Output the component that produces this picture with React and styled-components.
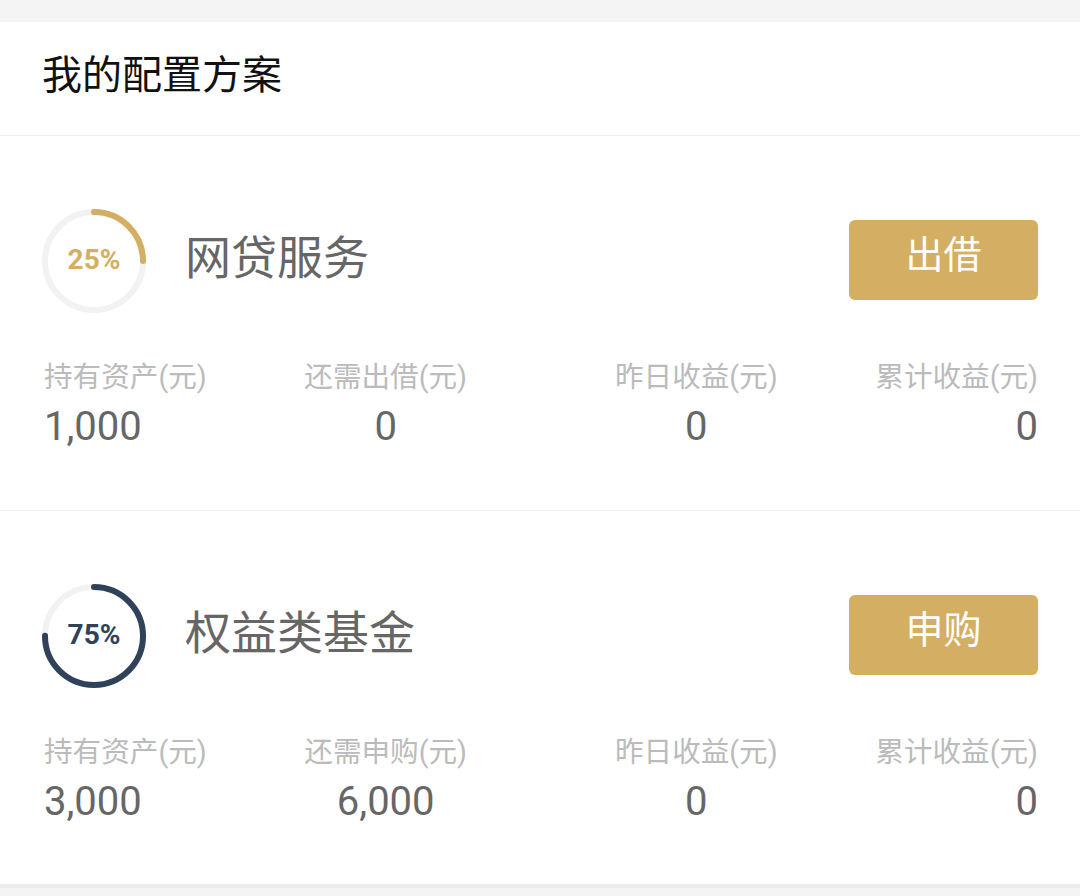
import { createGlobalStyle, styled } from "styled-components";

const GlobalStyle = createGlobalStyle`
  html, body {
    margin: 0;
    padding: 0;
    background: #f4f4f4;
  }
  body {
    font-family: Roboto, "Noto Sans CJK SC", "Noto Sans", sans-serif;
  }
`;

const plans = [
  {
    percent: 25,
    color: "#d4ae62",
    name: "网贷服务",
    action: "出借",
    stats: [
      { label: "持有资产(元)", value: "1,000" },
      { label: "还需出借(元)", value: "0" },
      { label: "昨日收益(元)", value: "0" },
      { label: "累计收益(元)", value: "0" },
    ],
  },
  {
    percent: 75,
    color: "#2f4259",
    name: "权益类基金",
    action: "申购",
    stats: [
      { label: "持有资产(元)", value: "3,000" },
      { label: "还需申购(元)", value: "6,000" },
      { label: "昨日收益(元)", value: "0" },
      { label: "累计收益(元)", value: "0" },
    ],
  },
];

const Ring = ({ percent, color }) => {
  const r = 49;
  const c = 2 * Math.PI * r;
  return (
    <RingBox>
      <svg width="106" height="106" viewBox="0 0 106 106">
        <circle cx="53" cy="53" r={r} fill="none" stroke="#f2f2f2" strokeWidth="6" />
        <circle
          cx="53"
          cy="53"
          r={r}
          fill="none"
          stroke={color}
          strokeWidth="6"
          strokeLinecap="round"
          strokeDasharray={`${(c * percent) / 100} ${c}`}
          transform="rotate(-90 53 53)"
        />
      </svg>
      <RingText $color={color}>{percent}%</RingText>
    </RingBox>
  );
};

const App = () => {
  return (
    <>
      <GlobalStyle />
      <Page>
        <Header>我的配置方案</Header>
        {plans.map((p) => (
          <Plan key={p.name}>
            <PlanTop>
              <Ring percent={p.percent} color={p.color} />
              <PlanName>{p.name}</PlanName>
              <ActionButton>{p.action}</ActionButton>
            </PlanTop>
            <Stats>
              {p.stats.map((s, i) => (
                <Stat key={s.label} $align={i === 0 ? "start" : i === 3 ? "end" : "center"}>
                  <StatLabel>{s.label}</StatLabel>
                  <StatValue>{s.value}</StatValue>
                </Stat>
              ))}
            </Stats>
          </Plan>
        ))}
      </Page>
    </>
  );
};

const Page = styled.div`
  margin-top: 22px;
  background: #fff;
  border-bottom: 4px solid #ececec;
`;

const Header = styled.div`
  height: 114px;
  box-sizing: border-box;
  padding: 0 0 14px 42px;
  display: flex;
  align-items: center;
  font-size: 40px;
  color: #111;
  border-bottom: 1px solid #ededed;
  font-family: "Noto Sans CJK SC", sans-serif;
`;

const Plan = styled.section`
  height: 374px;
  box-sizing: border-box;
  padding: 72px 42px 0 41px;
  & + & {
    border-top: 1px solid #ededed;
  }
`;

const PlanTop = styled.div`
  display: flex;
  align-items: center;
  height: 106px;
`;

const RingBox = styled.div`
  position: relative;
  width: 106px;
  height: 106px;
  flex: none;
  svg {
    display: block;
  }
`;

const RingText = styled.span`
  position: absolute;
  inset: 0;
  display: flex;
  align-items: center;
  justify-content: center;
  padding-bottom: 3px;
  font-family: Roboto, sans-serif;
  font-weight: 700;
  font-size: 28px;
  color: ${({ $color }) => $color};
`;

const PlanName = styled.div`
  margin-left: 38px;
  flex: 1;
  font-size: 46px;
  color: #666;
  font-family: "Noto Sans CJK SC", sans-serif;
  margin-top: -14px;
`;

const ActionButton = styled.button`
  width: 189px;
  height: 80px;
  margin-top: -2px;
  border: none;
  border-radius: 6px;
  background: #d4ae62;
  color: #fff;
  font-size: 38px;
  font-family: "Noto Sans CJK SC", sans-serif;
  padding: 0 0 17px;
  cursor: pointer;
`;

const Stats = styled.div`
  display: grid;
  grid-template-columns: 3fr 5fr 5fr 3fr;
  margin: 43px 0 0 3px;
`;

const Stat = styled.div`
  display: flex;
  flex-direction: column;
  align-items: ${({ $align }) => ($align === "start" ? "flex-start" : $align === "end" ? "flex-end" : "center")};
`;

const StatLabel = styled.div`
  font-size: 28.6px;
  line-height: 40px;
  color: #bbb;
  font-family: Roboto, "Noto Sans CJK SC", sans-serif;
  white-space: nowrap;
`;

const StatValue = styled.div`
  font-size: 40px;
  line-height: 50px;
  margin-top: 5px;
  color: #666;
  font-family: Roboto, sans-serif;
`;

export default App;
